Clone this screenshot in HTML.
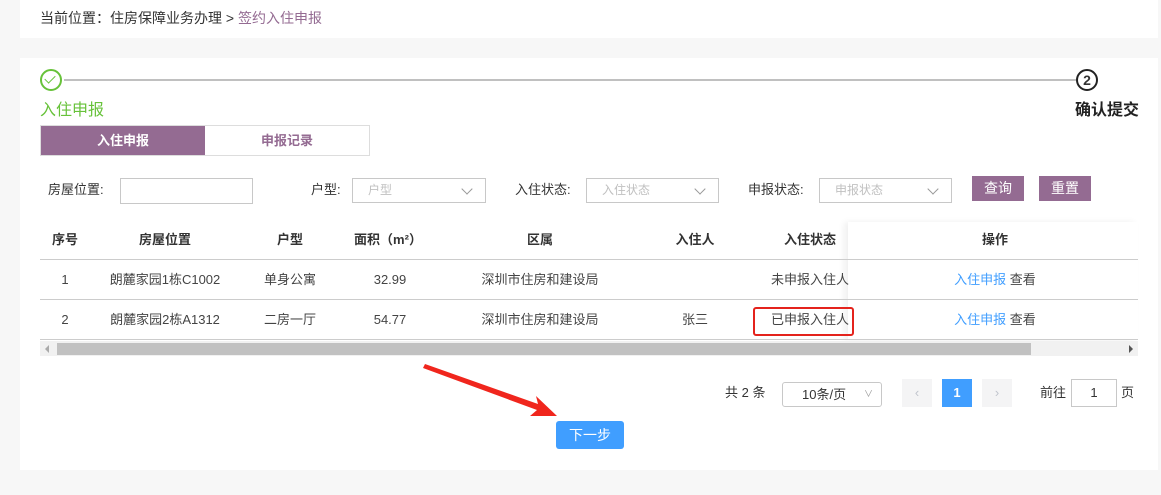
<!DOCTYPE html>
<html><head><meta charset="utf-8"><style>
*{margin:0;padding:0;box-sizing:border-box}
body{width:1161px;height:495px;background:#f7f7f7;font-family:"Liberation Sans","Noto Sans CJK SC",sans-serif;font-size:13px;color:#333;position:relative;overflow:hidden;line-height:16px}
.a{position:absolute}
.card{background:#fff}
.c{text-align:center}
.sel{border:1px solid #c8c8c8;background:#fff;height:25px;color:#c0c0c0;font-size:12px;line-height:23px;padding-left:15px}
.sel:after{content:"";position:absolute;right:14px;top:6px;width:7px;height:7px;border-right:1px solid #999;border-bottom:1px solid #999;transform:rotate(45deg)}
.btn{background:#946b92;color:#fff;height:25px;line-height:25px;text-align:center;font-size:14px}
.th{font-weight:bold;font-size:13px;top:232px;transform:translateX(-50%);white-space:nowrap}
.td{transform:translateX(-50%);white-space:nowrap;font-size:13px;color:#444;line-height:16px}
.line{height:1px;background:#ccc;left:40px;width:1098px}
</style></head><body>
<div class="a card" style="left:20px;top:0;width:1138px;height:38px"></div>
<div class="a" style="left:40px;top:10px;font-size:14px">当前位置：住房保障业务办理 &gt; <span style="color:#946b92">签约入住申报</span></div>
<div class="a card" style="left:20px;top:58px;width:1138px;height:412px"></div>
<div class="a" style="left:40px;top:69px;width:22px;height:22px;border:2px solid #67c23a;border-radius:50%"></div>
<div class="a" style="left:47px;top:73px;width:6px;height:10px;border-right:1.5px solid #67c23a;border-bottom:1.5px solid #67c23a;transform:rotate(45deg)"></div>
<div class="a" style="left:64px;top:79px;width:1012px;height:2px;background:#c0c0c0"></div>
<div class="a c" style="left:1076px;top:69px;width:22px;height:22px;border:2px solid #222;border-radius:50%;font-weight:bold;font-size:14px;line-height:18px">2</div>
<div class="a" style="left:40px;top:102px;font-size:16px;color:#67c23a;line-height:18px">入住申报</div>
<div class="a" style="left:1075px;top:102px;font-size:16px;font-weight:bold;color:#222;line-height:18px">确认提交</div>
<div class="a" style="left:40px;top:125px;width:330px;height:31px;border:1px solid #ddd"></div>
<div class="a c" style="left:41px;top:126px;width:164px;height:29px;background:#946b92;color:#fff;font-weight:bold;line-height:29px">入住申报</div>
<div class="a c" style="left:205px;top:126px;width:164px;height:29px;color:#946b92;font-weight:bold;line-height:29px">申报记录</div>
<div class="a" style="left:48px;top:182px">房屋位置:</div>
<div class="a" style="left:120px;top:178px;width:133px;height:26px;border:1px solid #c8c8c8"></div>
<div class="a" style="left:311px;top:182px">户型:</div>
<div class="a sel" style="left:352px;top:178px;width:134px">户型</div>
<div class="a" style="left:515px;top:182px">入住状态:</div>
<div class="a sel" style="left:586px;top:178px;width:133px">入住状态</div>
<div class="a" style="left:748px;top:182px">申报状态:</div>
<div class="a sel" style="left:819px;top:178px;width:133px">申报状态</div>
<div class="a btn" style="left:972px;top:176px;width:52px">查询</div>
<div class="a btn" style="left:1039px;top:176px;width:52px">重置</div>
<div class="a" style="left:848px;top:222px;width:290px;height:118px;box-shadow:-4px 0 6px rgba(0,0,0,0.06)"></div>
<div class="a th" style="left:65px">序号</div>
<div class="a th" style="left:165px">房屋位置</div>
<div class="a th" style="left:290px">户型</div>
<div class="a th" style="left:388px">面积（m²）</div>
<div class="a th" style="left:540px">区属</div>
<div class="a th" style="left:695px">入住人</div>
<div class="a th" style="left:810px">入住状态</div>
<div class="a th" style="left:995px">操作</div>
<div class="a line" style="top:259px"></div>
<div class="a line" style="top:299px"></div>
<div class="a line" style="top:339px"></div>
<div class="a td" style="left:65px;top:272px">1</div>
<div class="a td" style="left:165px;top:272px">朗麓家园1栋C1002</div>
<div class="a td" style="left:290px;top:272px">单身公寓</div>
<div class="a td" style="left:390px;top:272px">32.99</div>
<div class="a td" style="left:540px;top:272px">深圳市住房和建设局</div>
<div class="a td" style="left:810px;top:272px">未申报入住人</div>
<div class="a td" style="left:995px;top:272px"><span style="color:#409eff">入住申报</span> 查看</div>
<div class="a td" style="left:65px;top:312px">2</div>
<div class="a td" style="left:165px;top:312px">朗麓家园2栋A1312</div>
<div class="a td" style="left:290px;top:312px">二房一厅</div>
<div class="a td" style="left:390px;top:312px">54.77</div>
<div class="a td" style="left:540px;top:312px">深圳市住房和建设局</div>
<div class="a td" style="left:695px;top:312px">张三</div>
<div class="a td" style="left:810px;top:312px">已申报入住人</div>
<div class="a td" style="left:995px;top:312px"><span style="color:#409eff">入住申报</span> 查看</div>
<div class="a" style="left:753px;top:307px;width:101px;height:29px;border:2px solid #e4231c;border-radius:3px"></div>
<div class="a" style="left:40px;top:341px;width:1098px;height:15px;background:#f1f1f1"></div>
<div class="a" style="left:57px;top:343px;width:974px;height:12px;background:#c1c1c1"></div>
<div class="a" style="left:45px;top:345px;border:4px solid transparent;border-right-color:#aaa;border-left:0"></div>
<div class="a" style="left:1129px;top:345px;border:4px solid transparent;border-left-color:#555;border-right:0"></div>
<div class="a" style="left:725px;top:385px">共 2 条</div>
<div class="a" style="left:782px;top:382px;width:100px;height:25px;border:1px solid #c8c8c8;border-radius:3px;padding-left:19px;line-height:23px">10条/页<span style="position:absolute;right:8px;font-size:9px;color:#999">∨</span></div>
<div class="a c" style="left:902px;top:379px;width:30px;height:28px;background:#f4f4f5;color:#c0c4cc;line-height:28px">‹</div>
<div class="a c" style="left:942px;top:379px;width:30px;height:28px;background:#409eff;color:#fff;font-weight:bold;line-height:28px">1</div>
<div class="a c" style="left:982px;top:379px;width:30px;height:28px;background:#f4f4f5;color:#c0c4cc;line-height:28px">›</div>
<div class="a" style="left:1040px;top:385px">前往</div>
<div class="a c" style="left:1071px;top:379px;width:46px;height:28px;border:1px solid #c8c8c8;line-height:26px">1</div>
<div class="a" style="left:1121px;top:385px">页</div>
<svg class="a" style="left:420px;top:360px" width="140" height="60"><polygon points="5,4 118,44 116,36 137,56 110,56 117,50 3,8" fill="#f0261d"/></svg>
<div class="a c" style="left:556px;top:421px;width:68px;height:28px;background:#409eff;border-radius:3px;color:#fff;line-height:28px;font-size:14px">下一步</div>
</body></html>
